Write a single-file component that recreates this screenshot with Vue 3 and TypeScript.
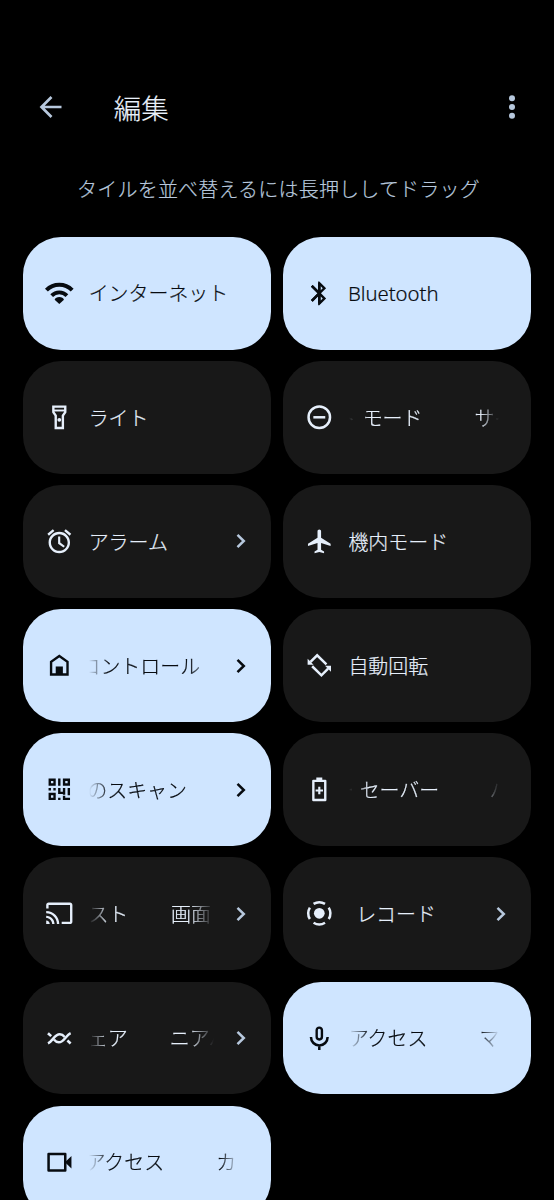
<script setup lang="ts">
type IconName =
  | 'wifi' | 'bluetooth' | 'torch' | 'dnd' | 'alarm' | 'plane' | 'home' | 'rotate'
  | 'qr' | 'battery' | 'cast' | 'record' | 'share' | 'mic' | 'camera'

interface Segment {
  text: string
  /** Space before the segment inside the scrolling label, in px. */
  before: number
}

interface Tile {
  icon: IconName
  segments: Segment[]
  active?: boolean
  chevron?: boolean
  fade?: boolean
  latin?: boolean
}

interface Shape {
  d: string
  /** Stroke width; filled when absent. */
  w?: number
  round?: boolean
}

const icons: Record<IconName, Shape[]> = {
  wifi: [
    { d: 'M1.2 9.3A15.2 15.2 0 0 1 22.8 9.3', w: 3.4 },
    { d: 'M5.6 13.9A8.9 8.9 0 0 1 18.4 13.9', w: 3.2 },
    { d: 'M12 20.9L8.1 17.4C8.5 15.9 10.1 15.1 12 15.1S15.5 15.9 15.9 17.4Z' },
  ],
  bluetooth: [
    { d: 'M17.71 7.71L12 2h-1v7.59L6.41 5 5 6.41 10.59 12 5 17.59 6.41 19 11 14.41V22h1l5.71-5.71-4.3-4.29 4.3-4.29zM13 5.83l1.88 1.88L13 9.59V5.83zm1.88 10.46L13 18.17v-3.76l1.88 1.88z' },
    { d: 'M5.7 5.7L12 12l-6.3 6.3M12 3.4V20.6', w: 2.1 },
  ],
  torch: [
    { d: 'M7 3h10v4.7l-2 2.8V21H9V10.5L7 7.7Z', w: 2 },
    { d: 'M7 6.3h10', w: 1.6 },
    { d: 'M12 12.5a1.6 1.6 0 1 0 0 3.2 1.6 1.6 0 0 0 0-3.2Z' },
  ],
  dnd: [
    { d: 'M12 3a9 9 0 1 0 0 18 9 9 0 0 0 0-18Z', w: 2.1 },
    { d: 'M7 12h10', w: 2.1 },
  ],
  alarm: [
    { d: 'M22 5.72l-4.6-3.86-1.29 1.53 4.6 3.86L22 5.72zM7.88 3.39L6.6 1.86 2 5.71l1.29 1.53 4.59-3.85zM12.8 8H11v6l4.55 3.3 1.100-1.450-3.850-2.750V8zM12 4c-4.97 0-9 4.03-9 9s4.02 9 9 9c4.97 0 9-4.03 9-9s-4.03-9-9-9zm0 16c-3.87 0-7-3.13-7-7s3.13-7 7-7 7 3.13 7 7-3.13 7-7 7z' },
  ],
  plane: [
    { d: 'M21.5 16v-2l-8-5V3.5c0-.83-.67-1.5-1.5-1.5s-1.5.67-1.5 1.5V9l-8 5v2l8-2.5V19l-2.5 1.5V22l4-1 4 1v-1.5L13.5 19v-5.5l8 2.5z' },
  ],
  home: [
    { d: 'M5.1 19.7V9.1L12 4.2l6.9 4.9V19.7Z', w: 2 },
    { d: 'M9 13h6v7H9Z' },
  ],
  rotate: [
    { d: 'M4.6 9.2L10.2 3.6 18 11.2', w: 2.1 },
    { d: 'M2.2 6.6v5h5Z' },
    { d: 'M19.4 14.8L13.8 20.4 6 12.8', w: 2.1 },
    { d: 'M21.8 17.4v-5h-5Z' },
  ],
  qr: [
    { d: 'M3 3h6v6H3ZM5 5v2h2V5ZM15 3h6v6h-6ZM17 5v2h2V5ZM3 15h6v6H3ZM5 17v2h2v-2ZM11 3h2v6h-2ZM3 11h2v2H3ZM7 11h2v2H7ZM11 11h2v3h2v-3h2v5.5h-2V16h-4ZM19 11h2v6h-2ZM11 19h2v2h-2ZM15 17.5h2v1.5h4v2h-6Z' },
  ],
  battery: [
    { d: 'M7 4.9h10V21H7Z', w: 2, round: true },
    { d: 'M9.5 2h5v3h-5ZM11.1 9.9h1.8v2.2h2.2v1.8h-2.2v2.2h-1.8v-2.2H8.9v-1.8h2.2Z' },
  ],
  cast: [
    { d: 'M21 3H3c-1.1 0-2 .9-2 2v3h2V5h18v14h-7v2h7c1.1 0 2-.9 2-2V5c0-1.1-.9-2-2-2zM1 18v3h3c0-1.66-1.34-3-3-3zm0-4v2c2.76 0 5 2.24 5 5h2c0-3.87-3.13-7-7-7zm0-4v2c4.97 0 9 4.03 9 9h2c0-6.08-4.93-11-11-11z' },
  ],
  record: [
    { d: 'M12 7.5a4.5 4.5 0 1 0 0 9 4.5 4.5 0 0 0 0-9Z' },
    { d: 'M7.2 4.1A9.25 9.25 0 0 1 16.8 4.1M19.9 7.2A9.25 9.25 0 0 1 19.9 16.8M16.8 19.9A9.25 9.25 0 0 1 7.2 19.9M4.1 16.8A9.25 9.25 0 0 1 4.1 7.2', w: 2.1 },
  ],
  share: [
    { d: 'M2.5 16.3C6.5 14.5 8 8.6 12.4 8.6c1.9 0 3.1 1 4.1 2.3', w: 2.1 },
    { d: 'M21.5 7.7C17.5 9.5 16 15.4 11.6 15.4c-1.9 0-3.1-1-4.1-2.3', w: 2.1 },
    { d: 'M2.5 7.7l2.7 2.5M18.8 13.8l2.7 2.5', w: 2.2 },
  ],
  mic: [
    { d: 'M12 3a2.2 2.2 0 0 1 2.2 2.2v5.6a2.2 2.2 0 0 1-4.4 0V5.2A2.2 2.2 0 0 1 12 3Z', w: 2 },
    { d: 'M5 11a7 7 0 0 0 14 0M12 17.600v4.200', w: 2.1 },
  ],
  camera: [
    { d: 'M3 5.1h14v13.8H3Z', w: 2.1, round: true },
    { d: 'M22.2 6.7v10.6l-4.8-4.7v-1.2Z' },
  ],
}

const one = (text: string, before = 0): Segment[] => [{ text, before }]

const tiles: Tile[] = [
  { icon: 'wifi', segments: one('インターネット'), active: true },
  { icon: 'bluetooth', segments: one('Bluetooth', -0.8), active: true, latin: true },
  { icon: 'torch', segments: one('ライト') },
  { icon: 'dnd', segments: [{ text: 'ト', before: -13 }, { text: 'モード', before: 7 }, { text: 'サイ', before: 52 }], fade: true },
  { icon: 'alarm', segments: one('アラーム'), chevron: true },
  { icon: 'plane', segments: one('機内モード', -0.3) },
  { icon: 'home', segments: one('コントロール', -8.2), active: true, chevron: true, fade: true },
  { icon: 'rotate', segments: one('自動回転', -0.3) },
  { icon: 'qr', segments: one('のスキャン', -1.4), active: true, chevron: true, fade: true },
  { icon: 'battery', segments: [{ text: 'ー', before: -15 }, { text: 'セーバー', before: 6 }, { text: 'バ', before: 50.5 }], fade: true },
  { icon: 'cast', segments: [{ text: 'スト', before: -0.3 }, { text: '画面', before: 42.8 }], chevron: true, fade: true },
  { icon: 'record', segments: one('レコード', 7.5), chevron: true },
  { icon: 'share', segments: [{ text: 'ェア', before: -0.8 }, { text: 'ニアバ', before: 42 }], chevron: true, fade: true },
  { icon: 'mic', segments: [{ text: 'アクセス', before: 0 }, { text: 'マ', before: 52 }], active: true, fade: true },
  { icon: 'camera', segments: [{ text: 'アクセス', before: -3.3 }, { text: 'カメ', before: 52.2 }], active: true, fade: true },
]
</script>

<template>
  <main class="screen">
    <header class="bar">
      <svg class="back" viewBox="0 0 24 24" aria-hidden="true">
        <path d="M22.5 12H3M12.5 2L2.5 12l10 10" />
      </svg>
      <h1 class="title">編集</h1>
      <svg class="more" viewBox="0 0 8 24" aria-hidden="true">
        <circle cx="4" cy="3.2" r="3" />
        <circle cx="4" cy="12" r="3" />
        <circle cx="4" cy="20.8" r="3" />
      </svg>
    </header>
    <p class="hint">タイルを並べ替えるには長押ししてドラッグ</p>
    <section class="grid">
      <div v-for="tile in tiles" :key="tile.icon" class="tile" :class="{ active: tile.active }">
        <svg class="icon" viewBox="0 0 24 24" aria-hidden="true">
          <path
            v-for="(shape, i) in icons[tile.icon]"
            :key="i"
            :d="shape.d"
            :class="[shape.w ? 'line' : 'solid', { round: shape.round }]"
            :stroke-width="shape.w"
          />
        </svg>
        <div class="label" :class="{ fade: tile.fade, short: tile.chevron, latin: tile.latin }">
          <span
            v-for="(seg, i) in tile.segments"
            :key="i"
            class="seg"
            :style="{ marginLeft: seg.before + 'px' }"
          >{{ seg.text }}</span>
        </div>
        <svg v-if="tile.chevron" class="chevron" viewBox="0 0 10 16" aria-hidden="true">
          <path d="M1.5 1.8L7.8 8l-6.3 6.2" />
        </svg>
      </div>
    </section>
  </main>
</template>

<style>
html,
body {
  margin: 0;
  background: #000;
}
</style>

<style scoped>
.screen {
  box-sizing: border-box;
  width: 554px;
  height: 1200px;
  overflow: hidden;
  background: #000;
  font-family: 'Noto Sans CJK JP', sans-serif;
  font-weight: 300;
  -webkit-text-stroke: 0.2px currentColor;
}

.bar {
  display: flex;
  align-items: center;
  height: 60px;
  padding: 77px 38.5px 0 39px;
}

.back {
  width: 24px;
  height: 24px;
  fill: none;
  stroke: #b7c8dd;
  stroke-width: 2.7;
}

.title {
  flex: 1;
  margin: 0 0 0 50.7px;
  color: #e9f1fb;
  font-size: 27.5px;
  font-weight: 300;
  line-height: 40px;
}

.more {
  width: 8px;
  height: 24px;
  fill: #b7c8dd;
}

.hint {
  margin: 37px 0 0;
  padding-left: 3px;
  color: #b7c8dd;
  font-size: 20px;
  letter-spacing: 0.2px;
  line-height: 30px;
  text-align: center;
}

.grid {
  display: grid;
  grid-template-columns: 248.5px 248.5px;
  grid-auto-rows: 112.6px;
  gap: 11.5px;
  margin-top: 33px;
  padding-left: 22.5px;
}

.tile {
  display: flex;
  align-items: center;
  box-sizing: border-box;
  padding: 0 25.5px 0 22.4px;
  border-radius: 38px;
  background: #181818;
  color: #e6effb;
}

.tile.active {
  background: #cfe5ff;
  color: #070b10;
}

.icon {
  flex: none;
  width: 28.6px;
  height: 28.6px;
  overflow: visible;
}

.solid {
  fill: currentColor;
  fill-rule: evenodd;
}

.line {
  fill: none;
  stroke: currentColor;
}

.round {
  stroke-linejoin: round;
}

.label {
  --fade-end: 7px;
  display: flex;
  flex: 1;
  min-width: 0;
  margin-left: 15.2px;
  padding-top: 0.3px;
  overflow: hidden;
  font-size: 19.95px;
  line-height: 30px;
  white-space: pre;
}

.label.short {
  --fade-end: 1px;
}

.label.fade {
  -webkit-mask-image: linear-gradient(to right, transparent 0, #000 20px, #000 calc(100% - 26px), transparent calc(100% - var(--fade-end)));
  mask-image: linear-gradient(to right, transparent 0, #000 20px, #000 calc(100% - 26px), transparent calc(100% - var(--fade-end)));
}

.label.latin {
  font-family: 'Noto Sans', sans-serif;
  font-size: 20.3px;
}

.seg {
  flex: none;
}

.chevron {
  flex: none;
  width: 10px;
  height: 16px;
  margin-left: 21px;
  fill: none;
  stroke: #b7c8dd;
  stroke-width: 2.5;
}

.active .chevron {
  stroke: #070b10;
}
</style>
